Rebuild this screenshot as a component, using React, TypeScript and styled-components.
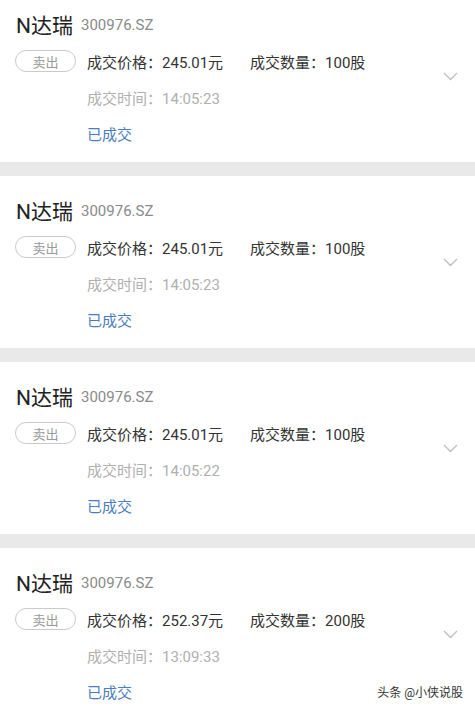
import styled, { createGlobalStyle } from 'styled-components';

type Trade = {
  price: string;
  qty: string;
  time: string;
};

const trades: Trade[] = [
  { price: '245.01元', qty: '100股', time: '14:05:23' },
  { price: '245.01元', qty: '100股', time: '14:05:23' },
  { price: '245.01元', qty: '100股', time: '14:05:22' },
  { price: '252.37元', qty: '200股', time: '13:09:33' },
];

const GlobalStyle = createGlobalStyle`
  html, body {
    margin: 0;
    padding: 0;
    background: #ffffff;
  }
  body {
    font-family: Roboto, "Noto Sans CJK SC", sans-serif;
    overflow: hidden;
  }
`;

const Chevron = () => (
  <svg width="15" height="9" viewBox="0 0 15 9">
    <polyline points="1,1 7.5,7.5 14,1" fill="none" stroke="#bdbdbd" strokeWidth="1.3" />
  </svg>
);

const App = () => {
  return (
    <SPage>
      <GlobalStyle />
      <SList>
        {trades.map((t, i) => (
          <SCard key={i}>
            <SMain>
              <STitle>
                <span className="name">N达瑞</span>
                <span className="code">300976.SZ</span>
              </STitle>
              <SRow>
                <SPill>卖出</SPill>
                <SField $width={163}>成交价格：{t.price}</SField>
                <SField>成交数量：{t.qty}</SField>
              </SRow>
              <STime>成交时间：{t.time}</STime>
              <SStatus>已成交</SStatus>
            </SMain>
            <SArrow>
              <Chevron />
            </SArrow>
          </SCard>
        ))}
      </SList>
      <SWatermark>头条 @小侠说股</SWatermark>
    </SPage>
  );
};

const SPage = styled.div`
  position: relative;
  width: 475px;
  height: 713px;
  overflow: hidden;
  background: #ffffff;
`;

const SList = styled.ul`
  list-style: none;
  margin: -10px 0 0;
  padding: 0;
  display: flex;
  flex-direction: column;
  gap: 14px;
  background: #e9e9e9;
`;

const SCard = styled.li`
  height: 172px;
  box-sizing: border-box;
  background: #ffffff;
  display: flex;
  align-items: center;
  padding: 0 17px 0 15px;
`;

const SMain = styled.div`
  flex: 1;
  align-self: stretch;
  display: flex;
  flex-direction: column;
`;

const STitle = styled.div`
  margin-top: 19px;
  height: 30px;
  display: flex;
  align-items: center;
  gap: 8px;
  padding-left: 1px;

  & .name {
    font-size: 21px;
    color: #222222;
  }

  & .code {
    font-size: 15px;
    color: #8a8a8a;
    padding-top: 1px;
  }
`;

const SRow = styled.div`
  margin-top: 10px;
  height: 24px;
  display: flex;
  align-items: center;
`;

const SPill = styled.span`
  width: 61px;
  height: 22px;
  box-sizing: border-box;
  border: 1px solid #cacaca;
  border-radius: 11px;
  display: flex;
  align-items: center;
  justify-content: center;
  font-size: 13px;
  color: #9a9a9a;
  margin-right: 11px;
`;

const SField = styled.span<{ $width?: number }>`
  width: ${(p) => (p.$width ? `${p.$width}px` : 'auto')};
  font-size: 15px;
  color: #333333;
  white-space: nowrap;
`;

const STime = styled.div`
  margin-top: 14px;
  height: 24px;
  line-height: 24px;
  padding-left: 72px;
  font-size: 15px;
  color: #b0b0b0;
`;

const SStatus = styled.div`
  margin-top: 12px;
  height: 24px;
  line-height: 24px;
  padding-left: 72px;
  font-size: 15px;
  color: #4a7cbf;
`;

const SArrow = styled.div`
  display: flex;
  align-items: center;
  line-height: 0;
`;

const SWatermark = styled.div`
  position: absolute;
  right: 12px;
  bottom: 13px;
  font-size: 12px;
  color: #333333;
  text-shadow: 0 0 2px #ffffff;
`;

export default App;
